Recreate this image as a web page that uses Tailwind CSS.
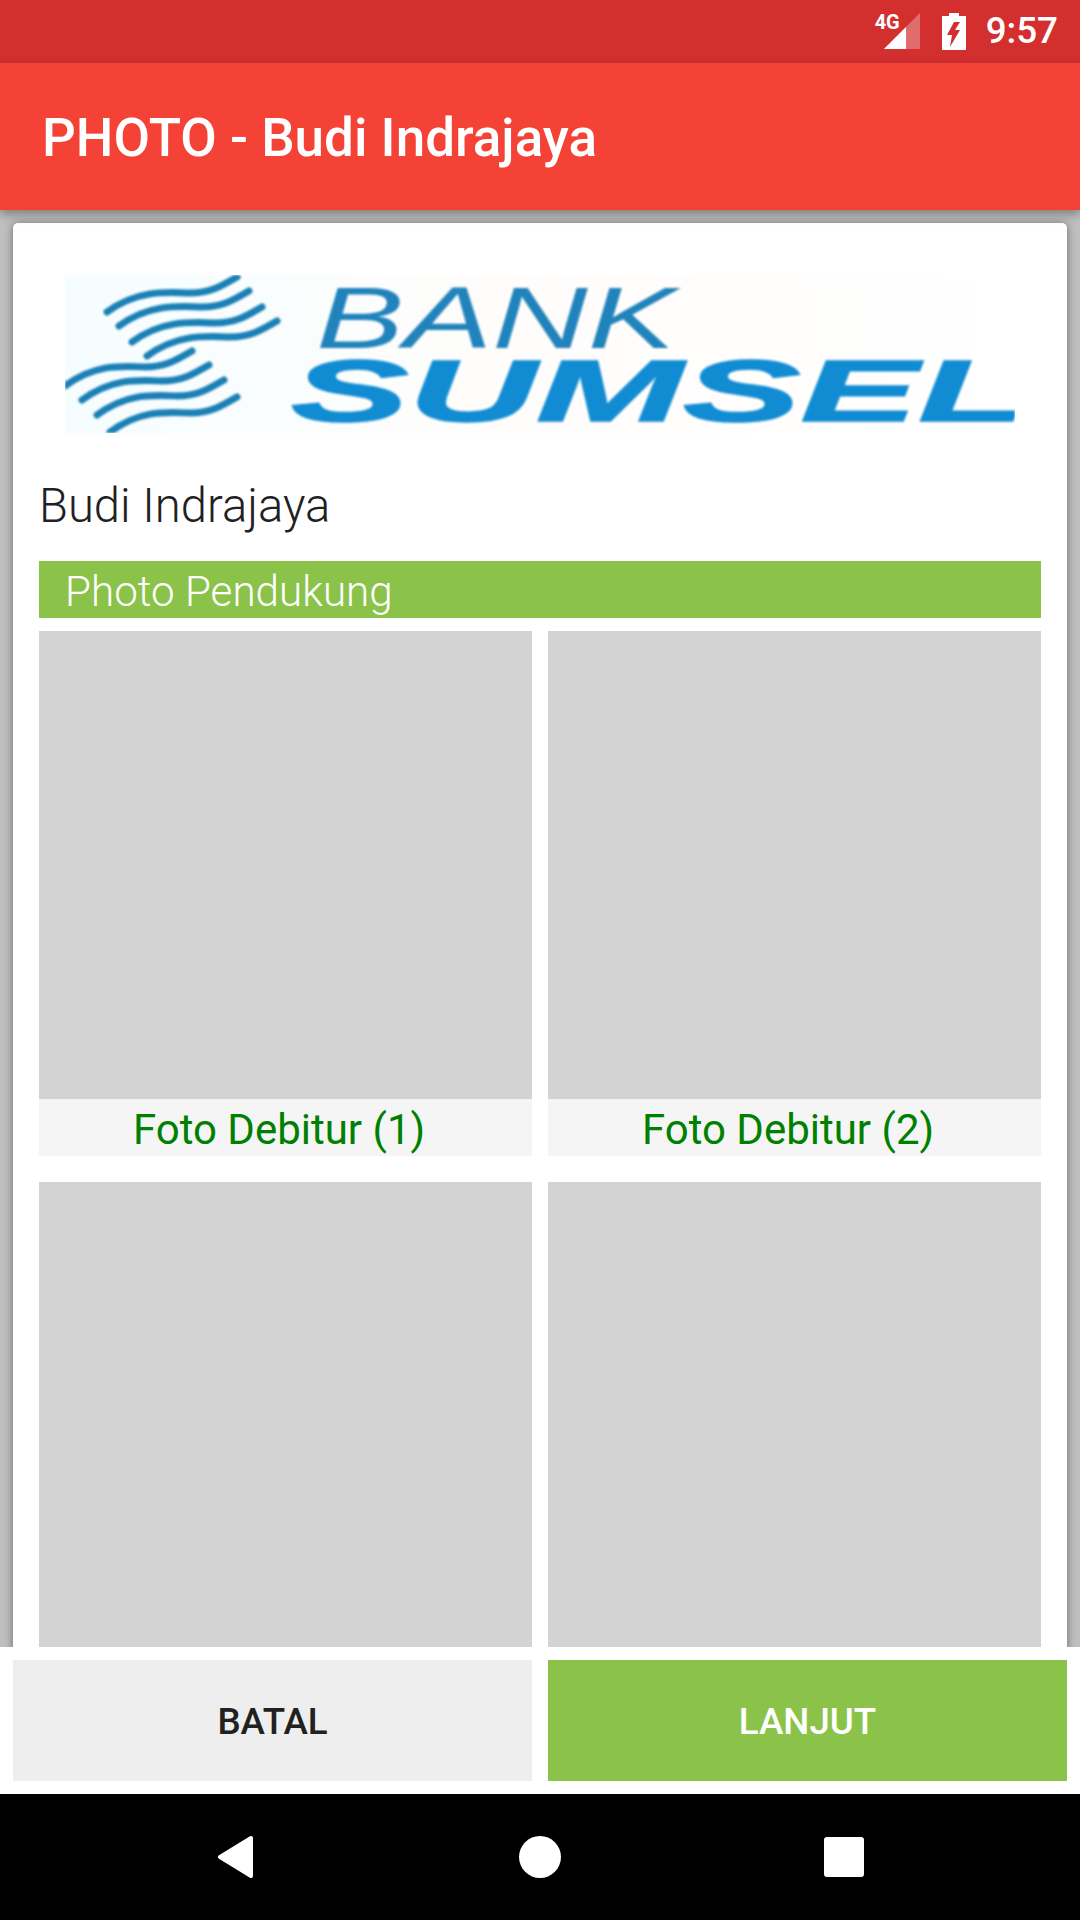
<!DOCTYPE html>
<html lang="en">
<head>
    <meta charset="UTF-8">
    <meta name="viewport" content="width=device-width, initial-scale=1.0">
    <title>Photo</title>
    <script src="https://cdn.jsdelivr.net/npm/@tailwindcss/browser@4"></script>
</head>
<body class="[font-family:Roboto,sans-serif]">
    <div class="flex flex-col w-[1080px] h-[1920px] overflow-hidden bg-[#bfbfbf]">
        <!-- Status bar -->
        <div class="flex items-center justify-end h-[63px] bg-[#d32f2f] text-white shrink-0">
            <div class="relative w-[46px] h-[37px] mt-[-1px]">
                <svg class="absolute right-0 top-0" width="36" height="36" viewBox="0 0 36 36">
                    <path d="M36 0V36H0Z" fill="#fff" fill-opacity="0.3"/>
                    <path d="M22 14V36H0Z" fill="#fff"/>
                </svg>
                <span class="absolute left-[1px] top-[-1px] text-[20px] leading-[20px] font-bold">4G</span>
            </div>
            <svg class="ml-[22px]" width="24" height="37" viewBox="0 0 24 37">
                <path d="M7 0H17V3H24V37H0V3H7Z" fill="#fff"/>
                <path d="M12 9L5 22H10L8 34L18 17H13L18 9Z" fill="#d32f2f"/>
            </svg>
            <span class="ml-[20px] mr-[22px] text-[36.75px] leading-none font-medium">9:57</span>
        </div>

        <!-- App bar -->
        <div class="relative z-10 flex items-center h-[147px] pl-[42px] pt-[4px] bg-[#f44336] text-white shrink-0 shadow-[0_4px_10px_rgba(0,0,0,0.35)]">
            <h1 class="text-[53px] font-medium leading-none">PHOTO - Budi Indrajaya</h1>
        </div>

        <!-- Scrolling content -->
        <div class="flex-1 min-h-0 overflow-hidden px-[13px] pt-[13px]">
            <div class="bg-white rounded-[5px] px-[26px] pt-[52px] shadow-[0_1px_8px_rgba(0,0,0,0.45)] min-h-[1600px]">
                <div class="relative ml-[26px] w-[950px] h-[158px] overflow-hidden bg-gradient-to-r from-[#f6fdff] via-[#fffdfb] to-[#ffffff]">
                    <svg class="blur-[1.2px]" width="950" height="158" viewBox="0 0 950 158">
                        <g fill="none" stroke="#1b80b6" stroke-width="7" stroke-linecap="round">
                            <path d="M42 37C72 15 100 17 125 18C145 18 155 12 172 2"/>
                            <path d="M54 51C84 29 112 31 137 32C157 32 167 26 184 16"/>
                            <path d="M67 67C97 45 125 47 150 48C170 48 180 42 197 32"/>
                            <path d="M82 81C112 59 140 61 165 62C185 62 195 56 212 46"/>
                            <path d="M0 111C30 89 55 91 80 92C100 92 110 86 127 76"/>
                            <path d="M17 125C47 103 72 105 97 106C117 106 127 100 144 90"/>
                            <path d="M32 140C62 118 87 120 112 121C132 121 142 115 159 105"/>
                            <path d="M45 157C75 135 100 137 125 138C145 138 155 132 172 122"/>
                        </g>
                        <text x="251" y="73" textLength="360" lengthAdjust="spacingAndGlyphs" font-family="Liberation Sans" font-style="italic" font-size="88" fill="#2183bb">BANK</text>
                        <text x="226" y="146" textLength="735" lengthAdjust="spacingAndGlyphs" font-family="Liberation Sans" font-style="italic" font-weight="700" font-size="87" fill="#118cd2" stroke="#118cd2" stroke-width="1.5">SUMSEL</text>
                    </svg>
                </div>

                <p class="mt-[46px] text-[47.2px] leading-[55px] font-light text-[#212121]">Budi Indrajaya</p>

                <div class="mt-[27px] h-[57px] pl-[26px] bg-[#8bc34a] text-white text-[42.2px] leading-[62px] font-light">Photo Pendukung</div>

                <div class="grid grid-cols-2 gap-x-[16px] gap-y-[26px] mt-[13px]">
                    <div>
                        <div class="h-[468px] bg-[#d3d3d3]"></div>
                        <div class="h-[57px] pr-[13px] bg-[#f5f5f5] text-[#008000] text-[42px] leading-[61px] text-center">Foto Debitur (1)</div>
                    </div>
                    <div>
                        <div class="h-[468px] bg-[#d3d3d3]"></div>
                        <div class="h-[57px] pr-[13px] bg-[#f5f5f5] text-[#008000] text-[42px] leading-[61px] text-center">Foto Debitur (2)</div>
                    </div>
                    <div><div class="h-[468px] bg-[#d3d3d3]"></div></div>
                    <div><div class="h-[468px] bg-[#d3d3d3]"></div></div>
                </div>
            </div>
        </div>

        <!-- Bottom buttons -->
        <div class="relative z-10 grid grid-cols-2 gap-x-[16px] h-[147px] px-[13px] pt-[13px] pb-[13px] bg-white shrink-0">
            <button class="pt-[2px] bg-[#eeeeee] text-[#212121] text-[36.75px] font-medium">BATAL</button>
            <button class="pt-[2px] bg-[#8bc34a] text-white text-[36.75px] font-medium">LANJUT</button>
        </div>

        <!-- Nav bar -->
        <div class="relative z-10 flex items-center justify-between h-[126px] pl-[218px] pr-[216px] bg-black shrink-0">
            <svg width="36" height="42" viewBox="0 0 36 42">
                <path d="M33 2L2 21L33 40Z" fill="#fff" stroke="#fff" stroke-width="4" stroke-linejoin="round"/>
            </svg>
            <div class="ml-[2px] w-[42px] h-[42px] rounded-full bg-white"></div>
            <div class="w-[40px] h-[40px] rounded-[3px] bg-white"></div>
        </div>
    </div>
</body>
</html>
